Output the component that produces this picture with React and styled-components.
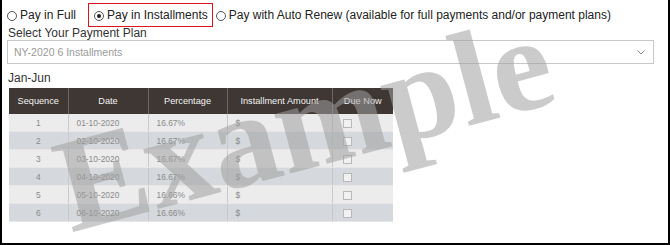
import React from "react";
import styled, { createGlobalStyle } from "styled-components";

const Global = createGlobalStyle`
  html, body { margin: 0; padding: 0; background: #fff; }
  body { font-family: "Liberation Sans", Arial, sans-serif; }
`;

const Frame = styled.div`
  position: relative;
  box-sizing: border-box;
  width: 670px;
  height: 245px;
  border: 2px solid #000;
  border-top: none;
  padding: 3px 14px 0 5px;
  overflow: hidden;
  background: #fff;
`;

const RadioRow = styled.div`
  display: flex;
  align-items: center;
  height: 24px;
  font-size: 12px;
  color: #222;
`;

const RadioOption = styled.label`
  display: flex;
  align-items: center;
  gap: 3px;
  box-sizing: border-box;
  height: 24px;
  white-space: nowrap;
  ${(p) =>
    p.$highlight
      ? `border: 1px solid #e2141b; padding: 0 4px 0 5px; margin: 0 3px 0 12px;`
      : ``}
`;

const RadioDot = styled.span`
  box-sizing: border-box;
  width: 10px;
  height: 10px;
  border-radius: 50%;
  border: 1px solid #555;
  background: #fff;
  display: inline-flex;
  align-items: center;
  justify-content: center;
  margin-top: 1px;
  flex: none;
  &::after {
    content: "";
    width: 4px;
    height: 4px;
    border-radius: 50%;
    background: ${(p) => (p.$checked ? "#222" : "transparent")};
  }
`;

const Label = styled.div`
  font-size: 12px;
  line-height: 14px;
  color: #333;
  margin-top: -1px;
  padding-left: 1px;
`;

const SelectBox = styled.div`
  box-sizing: border-box;
  height: 24px;
  border: 1px solid #c8c8c8;
  display: flex;
  align-items: center;
  justify-content: space-between;
  padding: 0 8px 0 6px;
  font-size: 10.5px;
  color: #9a9a9a;
`;

const Chevron = styled.svg`
  width: 8px;
  height: 5px;
`;

const Term = styled.div`
  font-size: 12px;
  line-height: 14px;
  color: #333;
  margin-top: 7px;
  padding-left: 1px;
`;

const Table = styled.table`
  margin: 3px 0 0 2px;
  width: 384px;
  border-collapse: collapse;
  table-layout: fixed;
  font-family: "Liberation Sans", Arial, sans-serif;
`;

const Th = styled.th`
  height: 26px;
  padding: 0;
  background: #3e3733;
  color: #f4f4f4;
  font-size: 9.2px;
  font-weight: normal;
  text-align: center;
  border-left: 1px solid #6e6763;
  &:first-child { border-left: none; }
`;

const Tr = styled.tr`
  background: ${(p) => (p.$even ? "#d5d8dc" : "#ececec")};
`;

const Td = styled.td`
  height: 17px;
  padding: 0 0 0 ${(p) => (p.$center ? 0 : 8)}px;
  font-size: 8.4px;
  color: #8a8a8a;
  text-align: ${(p) => (p.$center ? "center" : "left")};
  border-left: 1px solid #c9c9c9;
  border-bottom: 1px solid #e6e6e6;
  &:first-child { border-left: none; }
`;

const Check = styled.span`
  display: inline-block;
  box-sizing: border-box;
  width: 9px;
  height: 9px;
  border: 1px solid #b9b9b9;
  background: #f1f1f1;
  margin-left: 2px;
  vertical-align: middle;
`;

const Watermark = styled.div`
  position: absolute;
  left: 302px;
  top: 124px;
  transform: translate(-50%, -50%) rotate(-15deg);
  font-family: "Liberation Serif", "Times New Roman", serif;
  font-weight: bold;
  font-size: 134px;
  line-height: 0.8;
  color: rgba(160, 160, 160, 0.55);
  pointer-events: none;
  white-space: nowrap;
`;

const rows = [
  ["1", "01-10-2020", "16.67%"],
  ["2", "02-10-2020", "16.67%"],
  ["3", "03-10-2020", "16.67%"],
  ["4", "04-10-2020", "16.67%"],
  ["5", "05-10-2020", "16.66%"],
  ["6", "06-10-2020", "16.66%"],
];

export default function App() {
  return (
    <>
      <Global />
      <Frame>
        <RadioRow>
          <RadioOption>
            <RadioDot />
            Pay in Full
          </RadioOption>
          <RadioOption $highlight>
            <RadioDot $checked />
            Pay in Installments
          </RadioOption>
          <RadioOption>
            <RadioDot />
            Pay with Auto Renew (available for full payments and/or payment plans)
          </RadioOption>
        </RadioRow>
        <Label>Select Your Payment Plan</Label>
        <SelectBox>
          <span>NY-2020 6 Installments</span>
          <Chevron viewBox="0 0 8 5">
            <path d="M0.5 0.5 L4 4 L7.5 0.5" fill="none" stroke="#8a8a8a" strokeWidth="1" />
          </Chevron>
        </SelectBox>
        <Term>Jan-Jun</Term>
        <Table>
          <colgroup>
            <col style={{ width: 59 }} />
            <col style={{ width: 80 }} />
            <col style={{ width: 79 }} />
            <col style={{ width: 105 }} />
            <col style={{ width: 61 }} />
          </colgroup>
          <thead>
            <tr>
              <Th>Sequence</Th>
              <Th>Date</Th>
              <Th>Percentage</Th>
              <Th>Installment Amount</Th>
              <Th>Due Now</Th>
            </tr>
          </thead>
          <tbody>
            {rows.map((r, i) => (
              <Tr key={r[0]} $even={i % 2 === 1}>
                <Td $center>{r[0]}</Td>
                <Td>{r[1]}</Td>
                <Td>{r[2]}</Td>
                <Td>$</Td>
                <Td>
                  <Check />
                </Td>
              </Tr>
            ))}
          </tbody>
        </Table>
        <Watermark>Example</Watermark>
      </Frame>
    </>
  );
}
